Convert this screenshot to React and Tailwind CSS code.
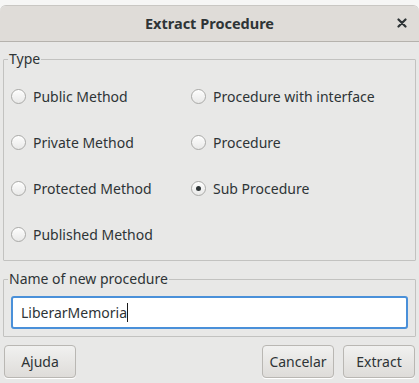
import React from 'react';

const Radio = ({ label, checked }) => (
  <label className="flex items-center gap-[7px] h-[20px]">
    <span className="w-[15px] h-[15px] rounded-full border border-[#a9a9a7] bg-gradient-to-b from-[#fdfdfd] to-[#e9e9e8] flex items-center justify-center shadow-[inset_0_1px_0_#ffffff]">
      {checked && <span className="w-[5px] h-[5px] rounded-full bg-[#2e3436]" />}
    </span>
    <span>{label}</span>
  </label>
);

const Btn = ({ children, className = '' }) => (
  <button className={`h-[33px] w-[72px] rounded-[4px] border border-[#b9b7b3] bg-gradient-to-b from-[#f1f1f0] to-[#dedcd9] text-[#2e3436] shadow-[0_1px_0_#ffffff] ${className}`}>
    {children}
  </button>
);

export default function App() {
  return (
    <div className="w-[419px] h-[383px] bg-[#f6f6f5] overflow-hidden text-[14px] text-[#2e3436]" style={{ fontFamily: '"Noto Sans", "Open Sans", sans-serif' }}>
      <div className="mt-[5px] h-[378px] flex flex-col bg-[#e8e8e7] rounded-t-[6px] border-t border-[#c9c7c3]">
        <div className="h-[36px] shrink-0 flex items-center justify-center relative bg-[#dfdcd8] border-b border-[#b5b2ad] rounded-t-[6px]">
          <span className="font-bold text-[14.5px] text-[#2e3436]">Extract Procedure</span>
          <span className="absolute right-[8px] top-[8px] w-[18px] h-[18px] flex items-center justify-center">
            <svg width="10" height="10" viewBox="0 0 10 10">
              <path d="M1.5 1.5 L8.5 8.5 M8.5 1.5 L1.5 8.5" stroke="#2e3436" strokeWidth="2.2" strokeLinecap="round" />
            </svg>
          </span>
        </div>

        <div className="flex-1 flex flex-col px-[3px] pt-[9px]">
          <fieldset className="border border-[#c2c2c0] rounded-[1px] px-[7px] h-[210px]">
            <legend className="px-[1px] ml-[-3px] leading-[16px]">Type</legend>
            <div className="grid grid-cols-[180px_1fr] gap-y-[26px] pt-[19px]">
              <Radio label="Public Method" />
              <Radio label="Procedure with interface" />
              <Radio label="Private Method" />
              <Radio label="Procedure" />
              <Radio label="Protected Method" />
              <Radio label="Sub Procedure" checked />
              <Radio label="Published Method" />
            </div>
          </fieldset>

          <fieldset className="mt-[10px] border border-[#c2c2c0] rounded-[1px] px-[7px] pb-[7px]">
            <legend className="px-[1px] ml-[-3px] leading-[16px]">Name of new procedure</legend>
            <div className="mt-[9px] h-[33px] rounded-[3px] border-2 border-[#4a90d9] bg-white flex items-center pl-[8px]">
              <span>LiberarMemoria</span>
              <span className="w-[1px] h-[19px] bg-[#1a1a1a]" />
            </div>
          </fieldset>

          <div className="flex mt-[8px] px-[1px]">
            <Btn>Ajuda</Btn>
            <div className="flex-1" />
            <Btn className="mr-[9px]">Cancelar</Btn>
            <Btn>Extract</Btn>
          </div>
        </div>
      </div>
    </div>
  );
}
